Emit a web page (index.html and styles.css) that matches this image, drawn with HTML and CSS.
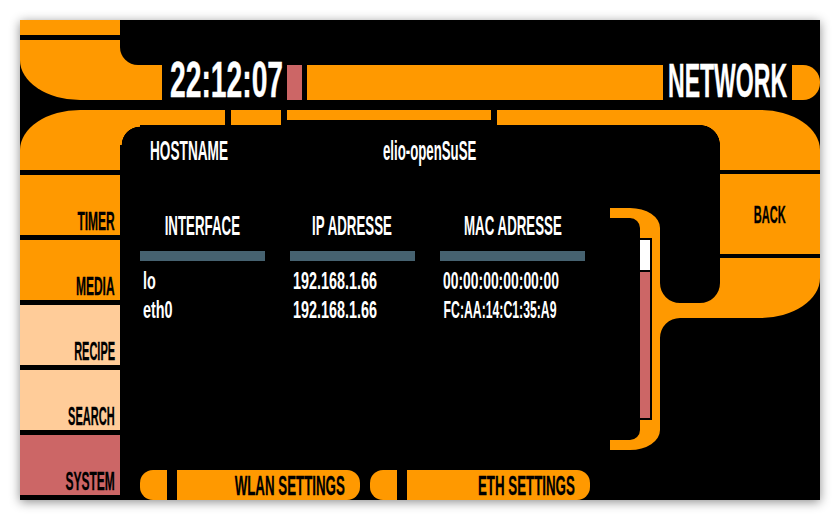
FILE: index.html
```html
<!DOCTYPE html>
<html lang="en">
<head>
  <meta charset="UTF-8">
  <title>Network</title>
  <link rel="stylesheet" href="styles.css">
</head>
<body>
<div class="screen">
  <div class="header">
    <div class="header-left">
      <div class="stub"></div>
      <div class="elbow-top"></div>
    </div>
    <div class="time">22:12:07</div>
    <div class="block red"></div>
    <div class="block fill"></div>
    <div class="title">NETWORK</div>
    <div class="block cap"></div>
  </div>

  <div class="frame">
    <div class="rail">
      <div class="elbow-left"></div>
      <a class="rail-btn orange"><span>TIMER</span></a>
      <a class="rail-btn orange"><span>MEDIA</span></a>
      <a class="rail-btn peach"><span class="tight">RECIPE</span></a>
      <a class="rail-btn peach"><span class="tight">SEARCH</span></a>
      <a class="rail-btn rose"><span>SYSTEM</span></a>
    </div>

    <div class="center">
      <div class="band">
        <div class="seg seg-a"></div>
        <div class="seg seg-b"></div>
        <div class="seg seg-c"></div>
        <div class="seg seg-d"></div>
      </div>
      <div class="body">
        <div class="panel">
          <div class="host">
            <div class="host-label">HOSTNAME</div>
            <div class="host-value">elio-openSuSE</div>
          </div>
          <div class="table">
            <div class="col">
              <div class="th"><span>INTERFACE</span></div>
              <div class="bar"></div>
              <div class="td">lo</div>
              <div class="td">eth0</div>
            </div>
            <div class="col">
              <div class="th"><span>IP ADRESSE</span></div>
              <div class="bar"></div>
              <div class="td">192.168.1.66</div>
              <div class="td">192.168.1.66</div>
            </div>
            <div class="col col-mac">
              <div class="th"><span>MAC ADRESSE</span></div>
              <div class="bar"></div>
              <div class="td td-zero">00:00:00:00:00:00</div>
              <div class="td td-mixed">FC:AA:14:C1:35:A9</div>
            </div>
          </div>
          <div class="actions">
            <div class="action">
              <div class="action-cap"></div>
              <a class="action-btn"><span>WLAN SETTINGS</span></a>
            </div>
            <div class="action">
              <div class="action-cap"></div>
              <a class="action-btn"><span>ETH SETTINGS</span></a>
            </div>
          </div>
        </div>
        <div class="wing">
          <svg width="210" height="242" viewBox="0 0 210 242">
            <path fill="#ff9900" d="M0 0H20A30 20 0 0 1 50 20V75A20 20 0 0 0 70 95H90A20 20 0 0 0 110 75V50H210V70A60 40 0 0 1 150 110H70A20 20 0 0 0 50 130V222A30 20 0 0 1 20 242H0V232H20A10 10 0 0 0 30 222V20A10 10 0 0 0 20 10H0Z"/>
          </svg>
          <div class="scrollbar"><div class="thumb"></div></div>
        </div>
      </div>
    </div>

    <div class="rail rail-right">
      <div class="elbow-right"></div>
      <a class="back"><span>BACK</span></a>
    </div>
  </div>
</div>
</body>
</html>
```

FILE: styles.css
```css
html, body { margin: 0; padding: 0; background: #fff; }
body { padding: 20px; width: 800px; height: 480px; overflow: hidden; font-family: "Liberation Sans", Arial, sans-serif; font-weight: bold; }
.screen { width: 800px; height: 480px; background: #000; box-shadow: 0 2px 10px rgba(0,0,0,.45); display: flex; flex-direction: column; color: #fff; }
a span, .th span { display: block; white-space: nowrap; }

/* header */
.header { display: flex; align-items: flex-end; height: 80px; margin-bottom: 10px; }
.header-left { width: 142px; }
.stub { width: 100px; height: 15px; margin-bottom: 5px; background: #ff9900; }
.elbow-top { position: relative; height: 60px; background: #ff9900; border-bottom-left-radius: 60px 40px; }
.elbow-top::after { content: ""; position: absolute; top: 0; right: 0; width: 42px; height: 25px; background: #000; border-bottom-left-radius: 18px; }
.time { width: 112px; height: 35px; margin: 0 5px 0 8px; font-size: 50px; line-height: 31px; white-space: nowrap; -webkit-text-stroke: .4px #fff; transform: scaleX(.565); transform-origin: left; }
.block { height: 35px; }
.red { width: 15px; margin-right: 5px; background: #cc6666; }
.fill { flex: 1; background: #ff9900; }
.title { width: 119px; height: 35px; margin: 0 5px; font-size: 48px; line-height: 31px; white-space: nowrap; -webkit-text-stroke: .4px #fff; transform: scaleX(.48); transform-origin: left; }
.cap { width: 28px; background: #ff9900; border-radius: 0 17px 17px 0; }

/* main frame */
.frame { display: flex; flex: 1; }
.rail { width: 100px; display: flex; flex-direction: column; gap: 5px; }
.elbow-left, .elbow-right { height: 60px; background: #ff9900; }
.elbow-left { border-top-left-radius: 60px 40px; }
.elbow-right { border-top-right-radius: 60px 40px; }
.rail-btn { height: 60px; display: flex; justify-content: flex-end; align-items: flex-end; padding-right: 5px; color: #000; font-size: 25px; line-height: 27px; }
.rail-btn span { transform: scaleX(.48); transform-origin: right; -webkit-text-stroke: .3px #000; }
.rail-btn span.tight { transform: scaleX(.44); }
.orange { background: #ff9900; }
.peach { background: #ffcc99; }
.rose { background: #cc6666; }
.rail-right { gap: 4px; }
.back { height: 80px; display: flex; justify-content: center; background: #ff9900; color: #000; font-size: 24px; line-height: 82px; }
.back span { transform: scaleX(.46); -webkit-text-stroke: .3px #000; }

/* top band */
.center { width: 600px; display: flex; flex-direction: column; }
.band { display: flex; gap: 6px; align-items: flex-start; }
.seg { height: 15px; background: #ff9900; position: relative; }
.seg-a { width: 105px; }
.seg-b { width: 50px; }
.seg-c { width: 204px; height: 10px; }
.seg-d { flex: 1; }
.seg-a::after, .seg-d::after { content: ""; position: absolute; top: 100%; width: 20px; height: 20px; }
.seg-a::after { left: 0; background: radial-gradient(circle at 100% 100%, transparent 18px, #ff9900 18.6px); }
.seg-d::after { right: 0; background: radial-gradient(circle at 0 100%, transparent 19.6px, #ff9900 20.2px); }

/* content */
.body { display: flex; flex: 1; }
.panel { width: 490px; display: flex; flex-direction: column; padding-left: 20px; box-sizing: border-box; }
.host { display: flex; height: 30px; margin-top: 11px; padding-left: 10px; font-size: 27px; line-height: 30px; }
.host-label { width: 233px; white-space: nowrap; transform: scaleX(.505); transform-origin: left; }
.host-value { white-space: nowrap; transform: scaleX(.49); transform-origin: left; }
.table { display: flex; gap: 25px; margin-top: 44px; }
.col { width: 125px; }
.col-mac { width: 145px; }
.th { display: flex; justify-content: center; height: 41px; font-size: 28px; line-height: 32px; }
.th span { transform: scaleX(.475); }
.bar { height: 10px; margin-bottom: 5px; background: #466270; }
.td { height: 29px; padding-left: 5px; font-size: 24px; line-height: 29px; white-space: nowrap; transform: scaleX(.6); transform-origin: left; }
.td-zero { transform: scaleX(.58); }
.td-mixed { transform: scaleX(.51); padding-left: 7px; }
.actions { display: flex; gap: 10px; margin-top: auto; }
.action { display: flex; gap: 10px; width: 220px; height: 30px; }
.action-cap { width: 27px; background: #ff9900; border-radius: 13px 0 0 13px; }
.action-btn { flex: 1; min-width: 0; display: flex; justify-content: flex-end; background: #ff9900; border-radius: 0 13px 13px 0; color: #000; font-size: 28px; line-height: 31px; padding-right: 15px; }
.action-btn span { transform: scaleX(.475); transform-origin: right; -webkit-text-stroke: .3px #000; }

/* scroll wing */
.wing { position: relative; width: 210px; height: 242px; margin: 83px -100px 0 0; }
.wing svg { display: block; }
.scrollbar { position: absolute; left: 28px; top: 30px; width: 10px; height: 178px; border: 2px solid #000; background: #cc6666; }
.thumb { height: 30px; background: #fff; border-bottom: 2px solid #000; }
```
